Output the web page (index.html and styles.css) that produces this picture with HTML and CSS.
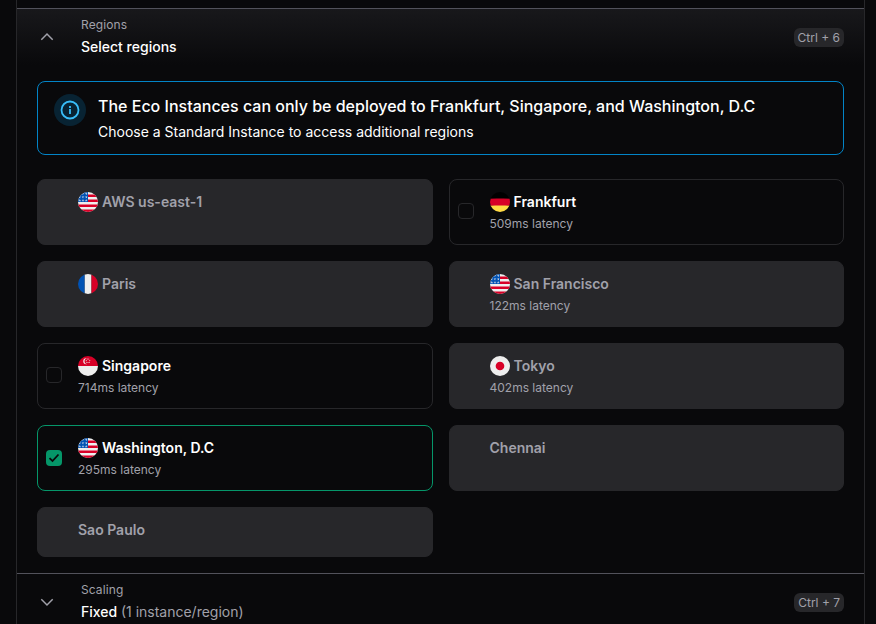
FILE: index.html
```html
<!DOCTYPE html>
<html lang="en">
<head>
<meta charset="utf-8">
<title>Regions</title>
<link rel="stylesheet" href="styles.css">
</head>
<body>
<svg class="defs" aria-hidden="true">
  <clipPath id="round"><circle cx="256" cy="256" r="256"/></clipPath>
  <symbol id="us" viewBox="0 0 512 512"><g clip-path="url(#round)">
    <path fill="#eee" d="M0 0h512v512H0z"/>
    <path fill="#d80027" d="M224 64h288v64H224zm0 128h288v64H224zM0 320h512v64H0zm0 128h512v64H0z"/>
    <path fill="#0052b4" d="M0 0h256v256H0z"/>
    <path fill="#eee" d="m187 243 57-41h-70l57 41-22-67zm-81 0 57-41H93l57 41-22-67zm-81 0 57-41H12l57 41-22-67zm162-82 57-41h-70l57 41-22-67zm-81 0 57-41H93l57 41-22-67zm-81 0 57-41H12l57 41-22-67zm162-82 57-41h-70l57 41-22-67zm-81 0 57-41H93l57 41-22-67z"/>
  </g></symbol>
  <symbol id="de" viewBox="0 0 512 512"><g clip-path="url(#round)">
    <path fill="#ffda44" d="m0 345 256.700-25.500L512 345v167H0z"/><path fill="#d80027" d="m0 167 255-23 257 23v178H0z"/><path fill="#000" d="M0 0h512v167H0z"/>
  </g></symbol>
  <symbol id="fr" viewBox="0 0 512 512"><g clip-path="url(#round)">
    <path fill="#eee" d="M167 0h178v512H167z"/><path fill="#0052b4" d="M0 0h167v512H0z"/><path fill="#d80027" d="M345 0h167v512H345z"/>
  </g></symbol>
  <symbol id="sg" viewBox="0 0 512 512"><g clip-path="url(#round)">
    <path fill="#eee" d="M0 256h512v256H0z"/><path fill="#d80027" d="M0 0h512v256H0z"/>
    <path fill="#eee" d="M167 133c0-37 27-68 62-76a78 78 0 0 0-17-2 78 78 0 0 0 0 156c6 0 12-1 17-2-35-8-62-39-62-76zm89-78 5 17h18l-14 11 5 17-14-10-15 10 6-17-15-11h18zm-44 34 6 17h18l-15 10 6 17-15-10-14 10 5-17-14-10h18zm89 0 5 17h18l-14 10 5 17-14-10-15 10 6-17-15-10h18zm-72 50 5 17h18l-14 10 5 17-14-10-15 10 6-17-15-10h18zm55 0 6 17h18l-15 10 6 17-15-10-14 10 5-17-14-10h18z"/>
  </g></symbol>
  <symbol id="jp" viewBox="0 0 512 512"><g clip-path="url(#round)">
    <path fill="#eee" d="M0 0h512v512H0z"/><circle cx="256" cy="256" r="111" fill="#d80027"/>
  </g></symbol>
</svg>

<main class="panel">
  <section class="section">
    <header class="section-head is-open">
      <svg class="chevron" viewBox="0 0 16 16"><path d="M2.300 10.700 8 5l5.700 5.700"/></svg>
      <div class="heading"><div class="label">Regions</div><div class="value">Select regions</div></div>
      <kbd class="key">Ctrl + 6</kbd>
    </header>

    <div class="section-body">
      <div class="notice">
        <div class="notice-icon"><svg viewBox="0 0 20 20"><circle cx="10" cy="10" r="8.500"/><path d="M10 9v5M10 6v2"/></svg></div>
        <div>
          <div class="notice-title">The Eco Instances can only be deployed to Frankfurt, Singapore, and Washington, D.C</div>
          <div class="notice-text">Choose a Standard Instance to access additional regions</div>
        </div>
      </div>

      <div class="regions">
        <div class="card disabled"><div class="name"><svg class="flag"><use href="#us"/></svg>AWS us-east-1</div></div>
        <div class="card"><span class="check"></span><div><div class="name"><svg class="flag"><use href="#de"/></svg>Frankfurt</div><div class="latency">509ms latency</div></div></div>
        <div class="card disabled"><div class="name"><svg class="flag"><use href="#fr"/></svg>Paris</div></div>
        <div class="card disabled"><div><div class="name"><svg class="flag"><use href="#us"/></svg>San Francisco</div><div class="latency">122ms latency</div></div></div>
        <div class="card"><span class="check"></span><div><div class="name"><svg class="flag"><use href="#sg"/></svg>Singapore</div><div class="latency">714ms latency</div></div></div>
        <div class="card disabled"><div><div class="name"><svg class="flag"><use href="#jp"/></svg>Tokyo</div><div class="latency">402ms latency</div></div></div>
        <div class="card selected"><span class="check"><svg viewBox="0 0 16 16"><path d="m3.500 8.200 3 2.800 6-6.500"/></svg></span><div><div class="name"><svg class="flag"><use href="#us"/></svg>Washington, D.C</div><div class="latency">295ms latency</div></div></div>
        <div class="card disabled"><div class="name">Chennai</div></div>
        <div class="card disabled"><div class="name">Sao Paulo</div></div>
      </div>
    </div>
  </section>

  <section class="section">
    <header class="section-head">
      <svg class="chevron" viewBox="0 0 16 16"><path d="M2.300 5.300 8 11l5.700-5.700"/></svg>
      <div class="heading"><div class="label">Scaling</div><div class="value">Fixed <span class="muted">(1 instance/region)</span></div></div>
      <kbd class="key">Ctrl + 7</kbd>
    </header>
  </section>
</main>
</body>
</html>
```
FILE: styles.css
```css
* { box-sizing: border-box; }
html, body { height: 100%; }
body {
  margin: 0;
  overflow: hidden;
  background: #09090b;
  color: #fff;
  font: 14px/20px Inter, "Liberation Sans", sans-serif;
}
.defs { position: absolute; width: 0; height: 0; }
.panel {
  width: 849px;
  height: 100%;
  margin-left: 16px;
  padding-top: 8px;
  border: solid #27272a;
  border-width: 0 1px;
  overflow: hidden;
}
.section { border-top: 1px solid #52525b; }
.section-head {
  display: flex;
  align-items: center;
  height: 56px;
  padding: 0 20px 0 22px;
}
.section-head.is-open { background: linear-gradient(#18181b, #09090b); }
.chevron { width: 16px; height: 16px; fill: none; stroke: #a1a1aa; stroke-width: 1.5; }
.heading { flex: 1; margin-left: 26px; }
.label { font-size: 12px; line-height: 20px; letter-spacing: .1px; color: #a1a1aa; }
.value { line-height: 24px; font-weight: 500; }
.muted { color: #a1a1aa; font-weight: 400; }
.key {
  padding: 0 4px;
  border-radius: 6px;
  background: #27272a;
  color: #a1a1aa;
  font: 12px/19px Inter, sans-serif;
}
.section-body { padding: 16px 20px; }
.notice {
  display: flex;
  gap: 12px;
  height: 74px;
  padding: 12px 16px;
  border: 1px solid #0284c7;
  border-radius: 8px;
}
.notice-icon {
  display: grid;
  place-items: center;
  width: 32px;
  height: 32px;
  border-radius: 50%;
  background: #082333;
}
.notice-icon svg { width: 20px; height: 20px; fill: none; stroke: #38bdf8; stroke-width: 1.800; }
.notice-title { font-size: 16px; line-height: 24px; font-weight: 500; }
.notice-text { margin-top: 4px; }
.regions {
  display: grid;
  grid-template-columns: 1fr 1fr;
  gap: 16px;
  margin-top: 24px;
}
.card {
  display: flex;
  min-height: 50px;
  padding: 11px 8px 10px;
  border: 1px solid #27272a;
  border-radius: 8px;
}
.card:not(:last-child) { height: 66px; }
.card.disabled { padding-left: 40px; background: #27272a; color: #a1a1aa; }
.card.selected { border-color: #059669; }
.check {
  width: 16px;
  height: 16px;
  margin: 12px 16px 0 0;
  border: 1px solid #27272a;
  border-radius: 4px;
}
.selected .check { margin-top: 13px; border: 0; background: #059669; }
.check svg { display: block; fill: none; stroke: #09090b; stroke-width: 1.800; }
.name { display: flex; gap: 4px; height: 22px; line-height: 22px; font-weight: 600; }
.flag { width: 20px; height: 20px; margin-top: 1px; }
.latency { font-size: 12px; line-height: 22px; color: #a1a1aa; }
```
